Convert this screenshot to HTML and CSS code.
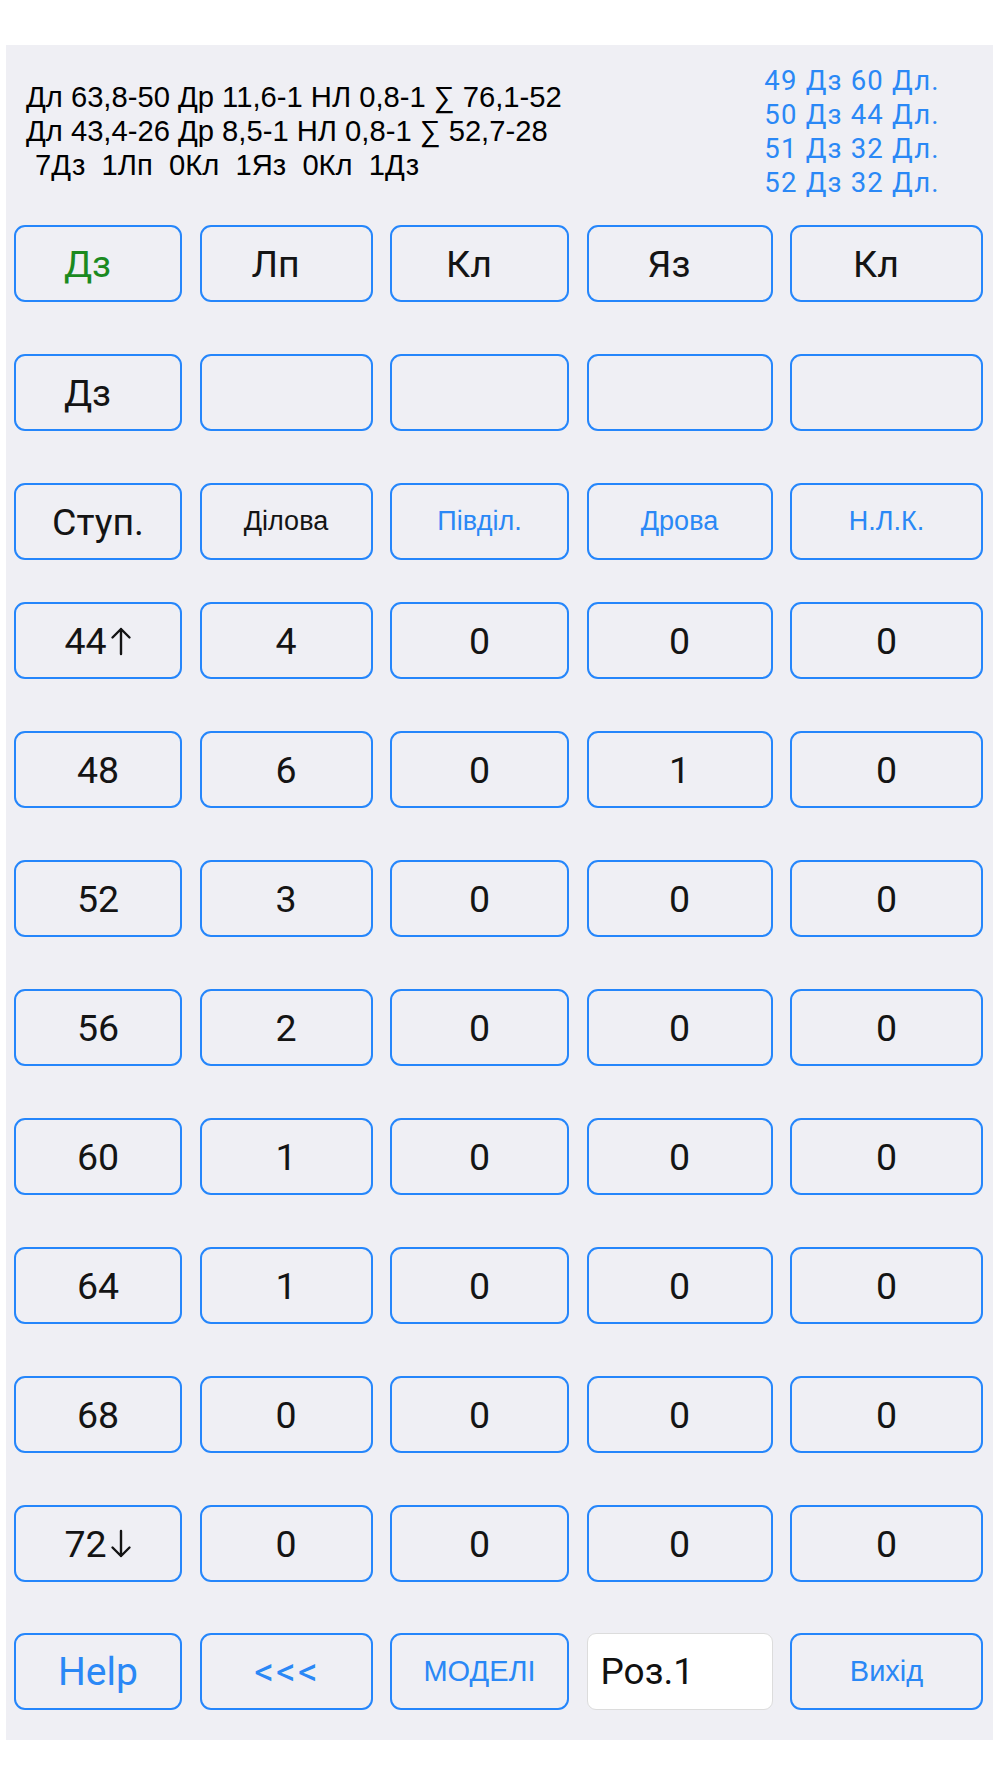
FILE: index.html
```html
<!DOCTYPE html>
<html lang="uk">
<head>
<meta charset="utf-8">
<title>Розкрій</title>
<link rel="stylesheet" href="styles.css">
</head>
<body>
<main class="panel">
  <header class="head">
    <div class="stats">
      <div class="stats-line">Дл 63,8-50 Др 11,6-1 НЛ 0,8-1 ∑ 76,1-52</div>
      <div class="stats-line">Дл 43,4-26 Др 8,5-1 НЛ 0,8-1 ∑ 52,7-28</div>
      <div class="stats-line stats-count">7Дз&nbsp; 1Лп&nbsp; 0Кл&nbsp; 1Яз&nbsp; 0Кл&nbsp; 1Дз</div>
    </div>
    <div class="models">
      <div>49 Дз 60 Дл.</div>
      <div>50 Дз 44 Дл.</div>
      <div>51 Дз 32 Дл.</div>
      <div>52 Дз 32 Дл.</div>
    </div>
  </header>

  <section class="rows">
    <div class="row">
      <button class="btn lead green">Дз</button>
      <button class="btn lead">Лп</button>
      <button class="btn lead">Кл</button>
      <button class="btn lead">Яз</button>
      <button class="btn lead">Кл</button>
    </div>
    <div class="row">
      <button class="btn lead">Дз</button>
      <button class="btn"></button>
      <button class="btn"></button>
      <button class="btn"></button>
      <button class="btn"></button>
    </div>
    <div class="row row-tight">
      <button class="btn">Ступ.</button>
      <button class="btn small">Ділова</button>
      <button class="btn small blue">Півділ.</button>
      <button class="btn small blue">Дрова</button>
      <button class="btn small blue">Н.Л.К.</button>
    </div>
    <div class="row">
      <button class="btn">44<svg class="arrow" viewBox="0 0 22 30" aria-label="↑"><path d="M11 28V3M2.5 11.5L11 3l8.5 8.5"/></svg></button>
      <button class="btn">4</button>
      <button class="btn">0</button>
      <button class="btn">0</button>
      <button class="btn">0</button>
    </div>
    <div class="row">
      <button class="btn">48</button>
      <button class="btn">6</button>
      <button class="btn">0</button>
      <button class="btn">1</button>
      <button class="btn">0</button>
    </div>
    <div class="row">
      <button class="btn">52</button>
      <button class="btn">3</button>
      <button class="btn">0</button>
      <button class="btn">0</button>
      <button class="btn">0</button>
    </div>
    <div class="row">
      <button class="btn">56</button>
      <button class="btn">2</button>
      <button class="btn">0</button>
      <button class="btn">0</button>
      <button class="btn">0</button>
    </div>
    <div class="row">
      <button class="btn">60</button>
      <button class="btn">1</button>
      <button class="btn">0</button>
      <button class="btn">0</button>
      <button class="btn">0</button>
    </div>
    <div class="row">
      <button class="btn">64</button>
      <button class="btn">1</button>
      <button class="btn">0</button>
      <button class="btn">0</button>
      <button class="btn">0</button>
    </div>
    <div class="row">
      <button class="btn">68</button>
      <button class="btn">0</button>
      <button class="btn">0</button>
      <button class="btn">0</button>
      <button class="btn">0</button>
    </div>
    <div class="row">
      <button class="btn">72<svg class="arrow" viewBox="0 0 22 30" aria-label="↓"><path d="M11 2v25M2.5 18.5L11 27l8.5-8.5"/></svg></button>
      <button class="btn">0</button>
      <button class="btn">0</button>
      <button class="btn">0</button>
      <button class="btn">0</button>
    </div>
    <div class="row row-bottom">
      <button class="btn blue big">Help</button>
      <button class="btn blue big chev">&lt;&lt;&lt;</button>
      <button class="btn mid blue">МОДЕЛІ</button>
      <div class="field">Роз.1</div>
      <button class="btn mid blue">Вихід</button>
    </div>
  </section>
</main>
</body>
</html>
```

FILE: styles.css
```css
html, body {
  margin: 0;
  padding: 0;
  background: #ffffff;
}

body {
  width: 1000px;
  height: 1778px;
  font-family: Roboto, "Liberation Sans", sans-serif;
}

.panel {
  margin: 45px 7px 0 6px;
  height: 1695px;
  background: #efeff4;
  box-sizing: border-box;
}

.head {
  display: flex;
  justify-content: space-between;
  height: 180px;
  box-sizing: border-box;
}

.stats {
  padding: 35px 0 0 20px;
  font-family: "Liberation Sans Narrow", "Liberation Sans", Arial, sans-serif;
  font-size: 29.2px;
  line-height: 34px;
  color: #000;
}

.stats-line {
  white-space: nowrap;
}

.stats-count {
  padding-left: 9px;
}

.models {
  width: 240px;
  margin-right: 21px;
  padding-top: 19px;
  text-align: center;
  font-family: Roboto, "Liberation Sans", sans-serif;
  font-size: 27.5px;
  letter-spacing: 1.2px;
  line-height: 34px;
  color: #2a88f6;
}

.rows {
  display: flex;
  flex-direction: column;
  gap: 52px;
  padding-left: 8px;
}

.row {
  display: grid;
  grid-template-columns: 168px 173px 179px 186px 193px;
  column-gap: 17.5px;
  height: 77px;
}

.row-tight {
  margin-bottom: -10px;
}

.row-bottom {
  margin-top: -1px;
}

.btn {
  display: flex;
  align-items: center;
  justify-content: center;
  box-sizing: border-box;
  height: 77px;
  margin: 0;
  padding: 0;
  border: 2px solid #2586fb;
  border-radius: 11px;
  background: transparent;
  font-family: Roboto, "Liberation Sans", sans-serif;
  font-size: 37.5px;
  color: #141414;
}

.arrow {
  width: 22px;
  height: 30px;
  margin-left: 3px;
  fill: none;
  stroke: #141414;
  stroke-width: 2.4;
  stroke-linecap: round;
  stroke-linejoin: round;
}

.lead {
  padding-right: 21px;
}

.green {
  color: #1b8a1f;
}

.blue {
  color: #2a88f6;
}

.small {
  font-family: "Liberation Sans Narrow", "Liberation Sans", Arial, sans-serif;
  font-size: 27px;
}

.mid {
  font-family: "Liberation Sans Narrow", "Liberation Sans", Arial, sans-serif;
  font-size: 29px;
}

.big {
  font-size: 39px;
}

.chev {
  letter-spacing: 2px;
  padding-left: 2px;
}

.field {
  display: flex;
  align-items: center;
  box-sizing: border-box;
  height: 77px;
  padding-left: 13px;
  background: #ffffff;
  border: 1px solid #dcdcdc;
  border-radius: 9px;
  font-family: Roboto, "Liberation Sans", sans-serif;
  font-size: 37px;
  color: #111;
}
```
